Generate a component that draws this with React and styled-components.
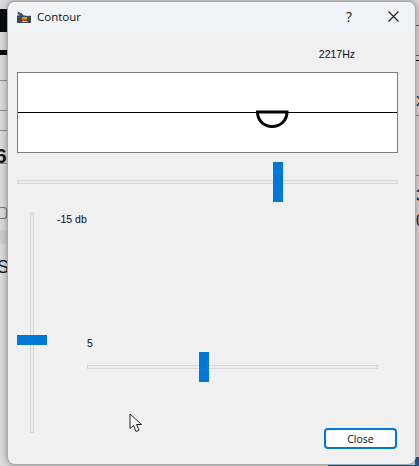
import React from 'react';
import styled, { createGlobalStyle } from 'styled-components';

const GlobalStyle = createGlobalStyle`
  html, body {
    margin: 0;
    padding: 0;
    overflow: hidden;
    background: #e6e6e6;
  }
`;

const Desktop = styled.div`
  display: flex;
  box-sizing: border-box;
  width: 419px;
  height: 466px;
  padding: 1px 0;
  overflow: hidden;
  background:
    linear-gradient(#1e5a96, #1e5a96) right bottom / 91px 1px no-repeat,
    linear-gradient(#1e5a96, #1e5a96) right bottom / 4px 9px no-repeat,
    #dcdcdc;
  font-family: 'Liberation Sans', Arial, sans-serif;
`;

// strips of the windows behind the dialog
const Strip = styled.div`
  display: flex;
  flex: none;
  flex-direction: column;
  width: ${props => props.width}px;
  margin-top: -1px;
  overflow: hidden;
`;

const Scrap = styled.div`
  flex: none;
  box-sizing: border-box;
  height: ${props => props.h || 1}px;
  margin-top: ${props => props.gap}px;
  background: ${props => props.color || '#8e8e8e'};
`;

const OutlineScrap = styled(Scrap)`
  border: 1px solid #777;
  border-left: 0;
  border-radius: 0 3px 3px 0;
  background: transparent;
`;

const ScrapText = styled.span`
  flex: none;
  height: ${props => props.h}px;
  margin-top: ${props => props.gap}px;
  margin-left: ${props => props.shift || 0}px;
  font-size: ${props => props.size}px;
  font-weight: ${props => (props.bold ? 700 : 400)};
  line-height: ${props => props.h}px;
  color: #10151c;
`;

const Window = styled.div`
  position: relative;
  z-index: 1;
  box-sizing: border-box;
  display: flex;
  flex: 1;
  flex-direction: column;
  min-width: 0;
  border: 1px solid #a9a9ac;
  border-radius: 8px;
  background: #f0f0f0;
  box-shadow: 0 0 7px rgba(0, 0, 0, 0.38);
  overflow: hidden;
`;

const TitleBar = styled.div`
  display: flex;
  align-items: center;
  flex: none;
  box-sizing: border-box;
  height: 31px;
  padding: 0 0 2px 9px;
  background: #f2f3f7;
  color: #111;
`;

const Title = styled.span`
  margin-left: 6px;
  font-family: 'Open Sans', sans-serif;
  font-size: 11.5px;
`;

const TitleButtons = styled.div`
  display: flex;
  align-items: center;
  margin-left: auto;
  padding-right: 16px;
  gap: 36px;
`;

const HelpGlyph = styled.span`
  font-family: 'Open Sans', sans-serif;
  font-size: 14px;
  color: #111;
`;

const Body = styled.div`
  display: flex;
  flex: 1;
  flex-direction: column;
  padding: 0 18px 0 9px;
`;

const SmallText = styled.div`
  height: 13px;
  font-size: 10.5px;
  line-height: 13px;
  color: #0a0a20;
`;

const FreqRow = styled.div`
  display: flex;
  justify-content: flex-end;
  padding: 15px 42px 11px 0;
`;

const Plot = styled.div`
  position: relative;
  display: flex;
  flex: none;
  flex-direction: column;
  justify-content: center;
  box-sizing: border-box;
  width: 381px;
  height: 81px;
  border: 1px solid #7c7c84;
  background: #fff;
`;

const CenterLine = styled.div`
  height: 1px;
  background: #000;
`;

const Bump = styled.svg`
  position: absolute;
  left: 237px;
  top: 37px;
`;

const Track = styled.div`
  position: relative;
  box-sizing: border-box;
  flex: none;
  width: ${props => (props.vertical ? '4px' : `${props.length}px`)};
  height: ${props => (props.vertical ? `${props.length}px` : '4px')};
  border: 1px solid #d6d8d6;
  background: #ececec;
`;

const HThumb = styled.div`
  position: absolute;
  top: 50%;
  width: 10px;
  height: ${props => props.size}px;
  transform: translateY(-50%);
  background: #0078d7;
`;

const VThumb = styled.div`
  position: absolute;
  left: 50%;
  width: 30px;
  height: 10px;
  transform: translateX(-50%);
  background: #0078d7;
`;

const FreqSlider = styled.div`
  padding: 27px 0 28px;
`;

const Lower = styled.div`
  display: flex;
  flex: 1;
  padding-left: 13px;
`;

const RightColumn = styled.div`
  display: flex;
  flex: 1;
  flex-direction: column;
  padding-left: 23px;
`;

const DbLabel = styled(SmallText)`
  margin-top: 1px;
`;

const AmountLabel = styled(SmallText)`
  margin: 111px 0 0 30px;
`;

const AmountSlider = styled.div`
  margin: 15px 0 0 30px;
`;

const Footer = styled.div`
  display: flex;
  justify-content: flex-end;
  margin-top: 59px;
`;

const CloseButton = styled.button`
  box-sizing: border-box;
  width: 73px;
  height: 21px;
  padding: 0;
  border: 2px solid #0078d4;
  border-radius: 4px;
  background: #fdfdfd;
  font-family: 'Open Sans', sans-serif;
  font-size: 10.5px;
  color: #111;
`;

const Cursor = styled.svg`
  position: absolute;
  left: 121px;
  top: 411px;
`;

const AppIcon = () => (
  <svg width="14" height="12" viewBox="0 0 14 12">
    <path d="M1 0.5 L5 2.5 L7 5 L3 5 L0.5 3 Z" fill="#44586a" />
    <rect x="0" y="4.5" width="14" height="7.5" fill="#3d4a55" />
    <rect x="9" y="4" width="4.5" height="1" fill="#d8d8d8" />
    <rect x="5" y="6" width="5" height="2" fill="#e0a030" />
    <rect x="5" y="8" width="5" height="2" fill="#c0461e" />
    <rect x="5" y="10" width="5" height="1" fill="#e8c860" />
  </svg>
);

const CloseIcon = () => (
  <svg width="11" height="11" viewBox="0 0 11 11">
    <path d="M0.5 0.5 L10.5 10.5 M10.5 0.5 L0.5 10.5" stroke="#222" strokeWidth="1.1" fill="none" />
  </svg>
);

const App = () => (
  <Desktop>
    <GlobalStyle />
    <Strip width={7}>
      <Scrap gap={9} h={23} color="#0b0d10" />
      <Scrap gap={18} h={5} color="#0b0d10" />
      <Scrap gap={25} />
      <Scrap gap={29} />
      <Scrap gap={19} />
      <ScrapText gap={17} h={15} size={21} shift={-5} bold>6</ScrapText>
      <Scrap gap={0} />
      <OutlineScrap gap={43} h={12} />
      <Scrap gap={11} h={14} color="#cfcfcf" />
      <ScrapText gap={16} h={15} size={18} shift={-3}>S</ScrapText>
    </Strip>
    <Window>
      <TitleBar>
        <AppIcon />
        <Title>Contour</Title>
        <TitleButtons>
          <HelpGlyph>?</HelpGlyph>
          <CloseIcon />
        </TitleButtons>
      </TitleBar>
      <Body>
        <FreqRow>
          <SmallText>2217Hz</SmallText>
        </FreqRow>
        <Plot>
          <CenterLine />
          <Bump width="34" height="20" viewBox="0 0 34 20">
            <path d="M2.5 2 L32 2 C32 10 26 16.5 17 16.5 C8.5 16.5 2.5 10 2.5 2 Z" fill="none" stroke="#000" strokeWidth="3" />
          </Bump>
        </Plot>
        <FreqSlider>
          <Track length={381}>
            <HThumb size={40} style={{ left: 255 }} />
          </Track>
        </FreqSlider>
        <Lower>
          <Track vertical length={221}>
            <VThumb style={{ top: 122 }} />
          </Track>
          <RightColumn>
            <DbLabel>-15 db</DbLabel>
            <AmountLabel>5</AmountLabel>
            <AmountSlider>
              <Track length={291}>
                <HThumb size={30} style={{ left: 111 }} />
              </Track>
            </AmountSlider>
            <Footer>
              <CloseButton>Close</CloseButton>
            </Footer>
          </RightColumn>
        </Lower>
      </Body>
      <Cursor width="14" height="20" viewBox="0 0 14 20">
        <path d="M1 1 L1 15.5 L4.5 12.5 L7 18.5 L10 17.2 L7.5 11.5 L12.5 11.5 Z" fill="#fff" stroke="#23232a" strokeWidth="1" />
      </Cursor>
    </Window>
    <Strip width={3}>
      <Scrap gap={25} color="#3c8a3c" />
      <Scrap gap={29} color="#3c8a3c" />
      <Scrap gap={4} color="#101010" />
      <ScrapText gap={34} h={12} size={14}>X</ScrapText>
      <Scrap gap={8} />
      <Scrap gap={59} />
      <ScrapText gap={14} h={12} size={16}>3</ScrapText>
      <ScrapText gap={13} h={12} size={16}>0</ScrapText>
    </Strip>
  </Desktop>
);

export default App;
